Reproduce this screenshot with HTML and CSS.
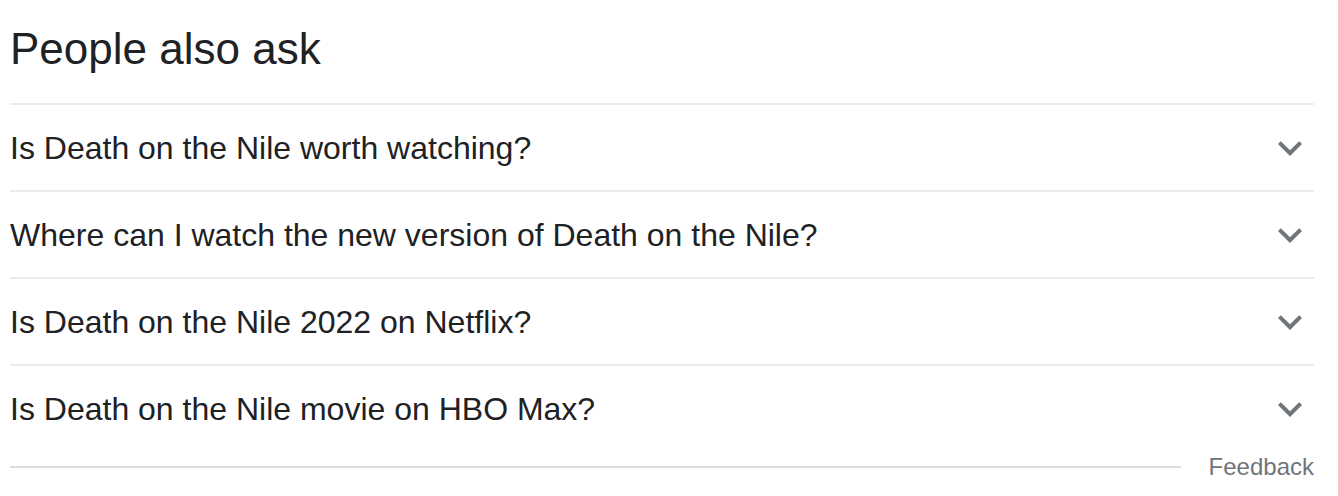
FILE: index.html
```html
<!DOCTYPE html>
<html>
<head>
<meta charset="utf-8">
<link rel="stylesheet" href="styles.css">
</head>
<body>
<div class="paa">
  <h2 class="paa-title">People also ask</h2>
  <div class="paa-list">
    <div class="paa-row">
      <span class="paa-q">Is Death on the Nile worth watching?</span>
      <svg class="paa-chev" viewBox="0 0 24 24" width="48" height="48"><path d="M16.59 8.59L12 13.17 7.41 8.59 6 10l6 6 6-6z"/></svg>
    </div>
    <div class="paa-row">
      <span class="paa-q">Where can I watch the new version of Death on the Nile?</span>
      <svg class="paa-chev" viewBox="0 0 24 24" width="48" height="48"><path d="M16.59 8.59L12 13.17 7.41 8.59 6 10l6 6 6-6z"/></svg>
    </div>
    <div class="paa-row">
      <span class="paa-q">Is Death on the Nile 2022 on Netflix?</span>
      <svg class="paa-chev" viewBox="0 0 24 24" width="48" height="48"><path d="M16.59 8.59L12 13.17 7.41 8.59 6 10l6 6 6-6z"/></svg>
    </div>
    <div class="paa-row">
      <span class="paa-q">Is Death on the Nile movie on HBO Max?</span>
      <svg class="paa-chev" viewBox="0 0 24 24" width="48" height="48"><path d="M16.59 8.59L12 13.17 7.41 8.59 6 10l6 6 6-6z"/></svg>
    </div>
  </div>
  <div class="paa-footer">
    <div class="paa-rule"></div>
    <span class="paa-feedback">Feedback</span>
  </div>
</div>
</body>
</html>
```
FILE: styles.css
```css
html, body {
  margin: 0;
  padding: 0;
  background: #fff;
}
body {
  font-family: Arial, "Liberation Sans", sans-serif;
  color: #202124;
}
.paa {
  width: 1304px;
  margin-left: 10px;
}
.paa-title {
  margin: 0;
  padding-top: 21px;
  font-size: 44px;
  font-weight: 400;
  line-height: 56px;
  height: 82px;
}
.paa-row {
  display: flex;
  align-items: center;
  justify-content: space-between;
  border-top: 2px solid #e8eaed;
  height: 85px;
}
.paa-q {
  font-size: 32px;
  line-height: 40px;
}
.paa-chev {
  fill: #70757a;
  margin-right: 0;
}
.paa-footer {
  display: flex;
  align-items: center;
  height: 32px;
}
.paa-rule {
  flex: 1;
  height: 2px;
  background: #dadce0;
}
.paa-feedback {
  margin-left: 28px;
  font-size: 24px;
  line-height: 30px;
  color: #70757a;
}
```
